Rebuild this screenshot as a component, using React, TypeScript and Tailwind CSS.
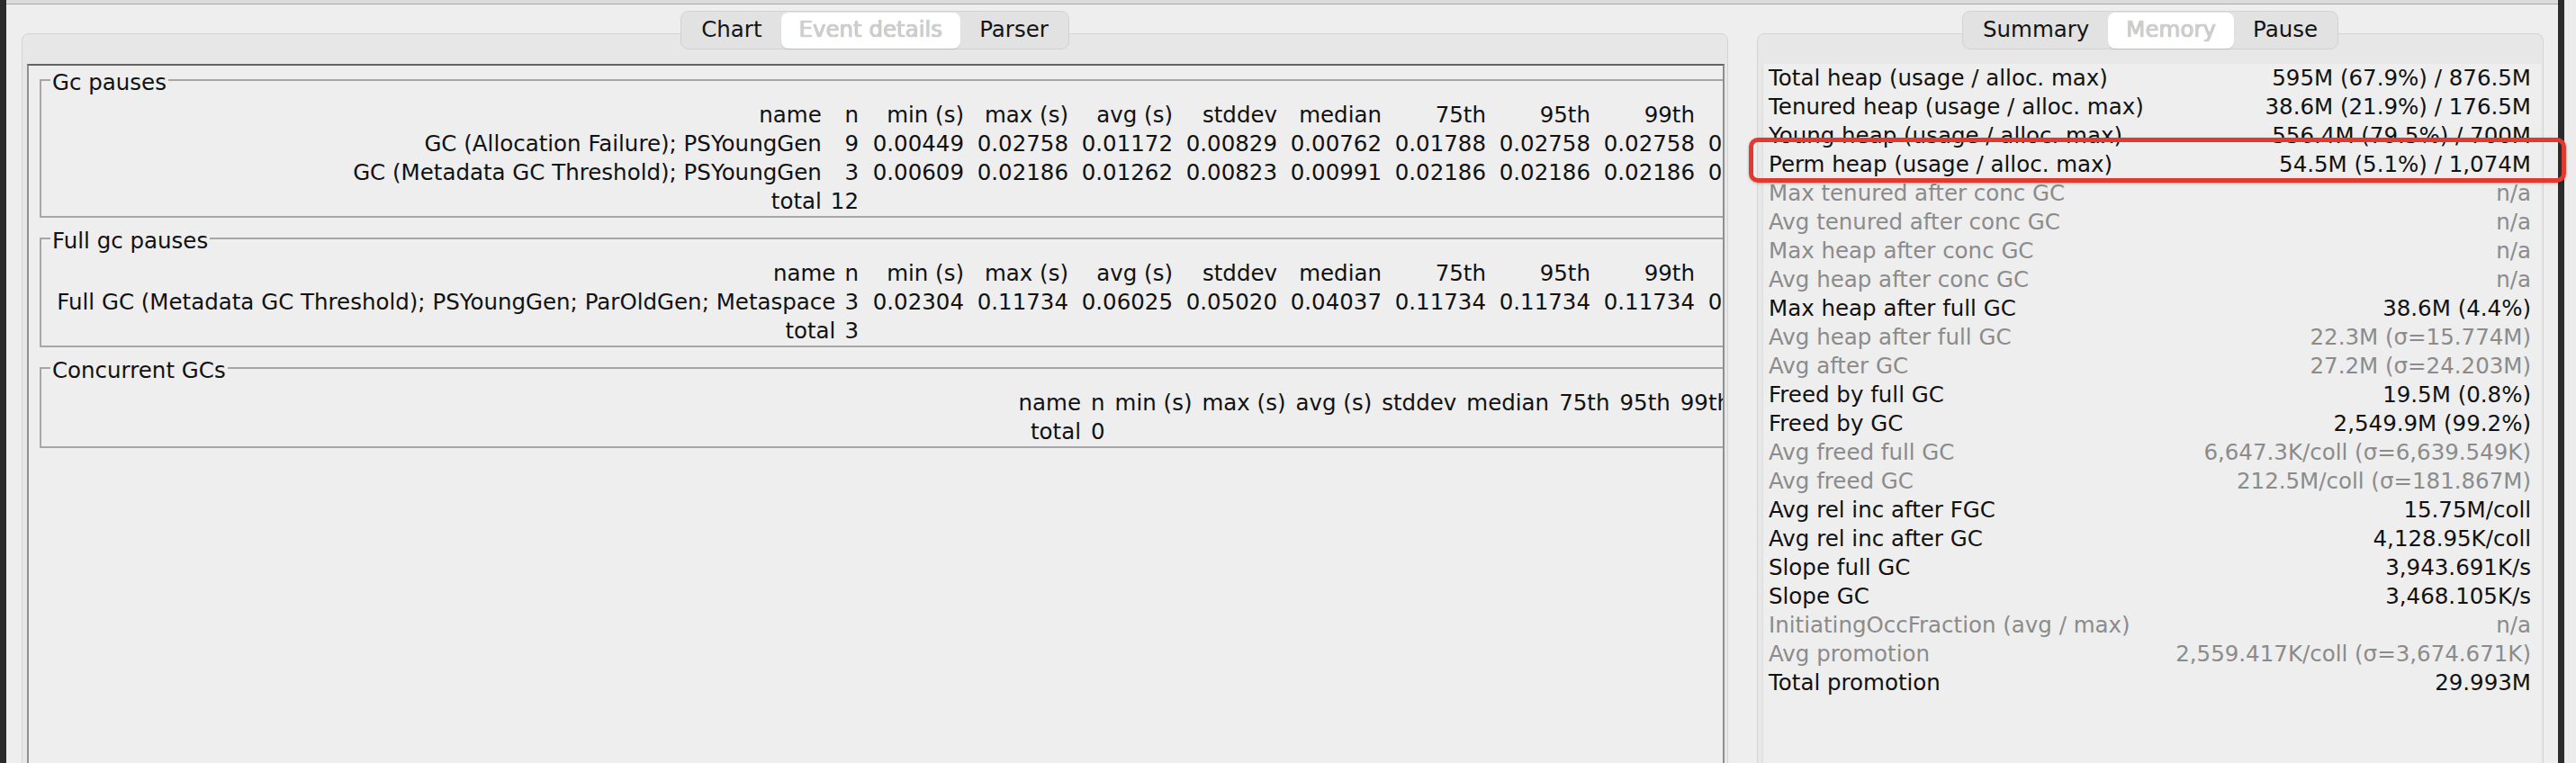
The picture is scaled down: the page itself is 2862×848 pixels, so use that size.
const memoryRows: { label: string; value: string; dim?: boolean }[] = [
  { label: 'Total heap (usage / alloc. max)', value: '595M (67.9%) / 876.5M' },
  { label: 'Tenured heap (usage / alloc. max)', value: '38.6M (21.9%) / 176.5M' },
  { label: 'Young heap (usage / alloc. max)', value: '556.4M (79.5%) / 700M' },
  { label: 'Perm heap (usage / alloc. max)', value: '54.5M (5.1%) / 1,074M' },
  { label: 'Max tenured after conc GC', value: 'n/a', dim: true },
  { label: 'Avg tenured after conc GC', value: 'n/a', dim: true },
  { label: 'Max heap after conc GC', value: 'n/a', dim: true },
  { label: 'Avg heap after conc GC', value: 'n/a', dim: true },
  { label: 'Max heap after full GC', value: '38.6M (4.4%)' },
  { label: 'Avg heap after full GC', value: '22.3M (σ=15.774M)', dim: true },
  { label: 'Avg after GC', value: '27.2M (σ=24.203M)', dim: true },
  { label: 'Freed by full GC', value: '19.5M (0.8%)' },
  { label: 'Freed by GC', value: '2,549.9M (99.2%)' },
  { label: 'Avg freed full GC', value: '6,647.3K/coll (σ=6,639.549K)', dim: true },
  { label: 'Avg freed GC', value: '212.5M/coll (σ=181.867M)', dim: true },
  { label: 'Avg rel inc after FGC', value: '15.75M/coll' },
  { label: 'Avg rel inc after GC', value: '4,128.95K/coll' },
  { label: 'Slope full GC', value: '3,943.691K/s' },
  { label: 'Slope GC', value: '3,468.105K/s' },
  { label: 'InitiatingOccFraction (avg / max)', value: 'n/a', dim: true },
  { label: 'Avg promotion', value: '2,559.417K/coll (σ=3,674.671K)', dim: true },
  { label: 'Total promotion', value: '29.993M' },
];

const columns = ['min (s)', 'max (s)', 'avg (s)', 'stddev', 'median', '75th', '95th', '99th', '99.5th', '99.9th', 'sum (s)', 'sum (%)'];

interface PauseRow {
  name: string;
  n: string;
  values: string[];
}

const gcPauses: PauseRow[] = [
  {
    name: 'GC (Allocation Failure); PSYoungGen',
    n: '9',
    values: ['0.00449', '0.02758', '0.01172', '0.00829', '0.00762', '0.01788', '0.02758', '0.02758', '0.02758', '0.02758', '0.10546', '41.702'],
  },
  {
    name: 'GC (Metadata GC Threshold); PSYoungGen',
    n: '3',
    values: ['0.00609', '0.02186', '0.01262', '0.00823', '0.00991', '0.02186', '0.02186', '0.02186', '0.02186', '0.02186', '0.03786', '14.971'],
  },
];

const fullGcPauses: PauseRow[] = [
  {
    name: 'Full GC (Metadata GC Threshold); PSYoungGen; ParOldGen; Metaspace',
    n: '3',
    values: ['0.02304', '0.11734', '0.06025', '0.05020', '0.04037', '0.11734', '0.11734', '0.11734', '0.11734', '0.11734', '0.18075', '71.476'],
  },
];

function Segmented({ items, active }: { items: string[]; active: string }) {
  return (
    <div className="relative z-10 flex h-[43px] shrink-0 items-center rounded-[9px] border border-[#d2d2d2] bg-[#e2e2e2] px-px">
      {items.map((item) =>
        item === active ? (
          <span
            key={item}
            className="flex h-[40px] items-center rounded-[8px] bg-white px-[20px] text-[#cfcfcf] shadow-[0_1px_1px_rgba(0,0,0,0.12)] [text-shadow:0_0_1px_#8f8f8f]"
          >
            {item}
          </span>
        ) : (
          <span key={item} className="flex h-[40px] items-center px-[21px] text-[#141414]">
            {item}
          </span>
        ),
      )}
    </div>
  );
}

function PauseTable({ rows, total }: { rows: PauseRow[]; total: string }) {
  return (
    <table className="ml-auto border-collapse leading-[32px] text-[#111]">
      <tbody>
        <tr className="h-[32px]">
          <td className="whitespace-nowrap px-[5px] text-right">name</td>
          <td className="px-[5px] text-right">n</td>
          {columns.map((c) => (
            <td key={c} className="w-[116px] whitespace-nowrap pr-[4px] text-right">
              {c}
            </td>
          ))}
        </tr>
        {rows.map((r) => (
          <tr key={r.name} className="h-[32px]">
            <td className="whitespace-nowrap px-[5px] text-right">{r.name}</td>
            <td className="px-[5px] text-right">{r.n}</td>
            {r.values.map((v, i) => (
              <td key={i} className="w-[116px] pr-[4px] text-right">
                {v}
              </td>
            ))}
          </tr>
        ))}
        <tr className="h-[32px]">
          <td className="px-[5px] text-right">total</td>
          <td className="px-[5px] text-right">{total}</td>
        </tr>
      </tbody>
    </table>
  );
}

function Titled({ title, children, className }: { title: string; children: React.ReactNode; className?: string }) {
  return (
    <fieldset className={`w-[2318px] border-2 border-[#a6a6a6] pr-[9px] pb-0 ${className ?? ''}`}>
      <legend className="relative top-[3px] ml-[10px] bg-[#eeeeee] px-[2px] leading-[32px] text-[#111]">{title}</legend>
      <div className="pt-[7px]">{children}</div>
    </fieldset>
  );
}

export default function App() {
  return (
    <div className="relative flex h-[848px] w-[2862px] items-start overflow-hidden bg-[#ececec] font-['DejaVu_Sans','Liberation_Sans',sans-serif] text-[24.5px]">
      <div className="flex w-[2849px] shrink-0 flex-col border-x-[7px] border-x-[#2b2b2b] bg-[#eeeeee]">
        <div className="h-[4px] shrink-0 bg-[#dcdcdc]" />
        <div className="h-px shrink-0 bg-[#a9a9a9]" />

        <div className="flex shrink-0 items-start gap-[32px] pl-[17px] pr-[16px]">
          {/* event details side */}
          <div className="flex w-[1896px] shrink-0 flex-col items-center">
            <div className="mt-[7px] shrink-0">
              <Segmented items={['Chart', 'Event details', 'Parser']} active="Event details" />
            </div>
            <div className="-mt-[18px] flex h-[900px] w-full shrink-0 flex-col rounded-[8px] border border-[#d4d4d4] bg-[#e7e7e7] pl-[5px] pr-[3px] pt-[33px]">
              <div className="flex-1 overflow-hidden border-2 border-[#8f8f8f] border-t-[#636363] bg-[#eeeeee] pl-[12px]">
                <Titled title="Gc pauses">
                  <PauseTable rows={gcPauses} total="12" />
                </Titled>
                <Titled title="Full gc pauses" className="mt-[7px]">
                  <PauseTable rows={fullGcPauses} total="3" />
                </Titled>
                <Titled title="Concurrent GCs" className="mt-[7px]">
                  <table className="ml-[1080px] border-collapse leading-[32px] text-[#111]">
                    <tbody>
                      <tr className="h-[32px]">
                        {['name', 'n', ...columns].map((c) => (
                          <td key={c} className="whitespace-nowrap px-[5.5px] text-right">
                            {c}
                          </td>
                        ))}
                      </tr>
                      <tr className="h-[32px]">
                        <td className="px-[5.5px] text-right">total</td>
                        <td className="px-[5.5px] text-right">0</td>
                      </tr>
                    </tbody>
                  </table>
                </Titled>
              </div>
            </div>
          </div>

          {/* memory side */}
          <div className="flex w-[874px] shrink-0 flex-col items-center">
            <div className="mt-[7px] shrink-0">
              <Segmented items={['Summary', 'Memory', 'Pause']} active="Memory" />
            </div>
            <div className="-mt-[18px] flex h-[900px] w-full shrink-0 flex-col rounded-[8px] border border-[#d4d4d4] bg-[#e7e7e7] pl-[5px] pr-[2px] pt-[33px]">
              <div className="flex-1 border-l border-[#dddddd] bg-[#eeeeee] pl-[6px] pr-[11px]">
                {memoryRows.map((r) => (
                  <div
                    key={r.label}
                    className={`flex h-[32px] items-center justify-between whitespace-nowrap leading-[32px] ${r.dim ? 'text-[#8b8b8b]' : 'text-[#111]'}`}
                  >
                    <span>{r.label}</span>
                    <span>{r.value}</span>
                  </div>
                ))}
              </div>
            </div>
          </div>
        </div>
      </div>

      {/* annotation */}
      <div className="pointer-events-none absolute left-[1943px] top-[153px] h-[50px] w-[908px] rounded-[10px] border-[5px] border-[#e23a2e] shadow-[0_1px_3px_rgba(0,0,0,0.25)]" />
    </div>
  );
}
